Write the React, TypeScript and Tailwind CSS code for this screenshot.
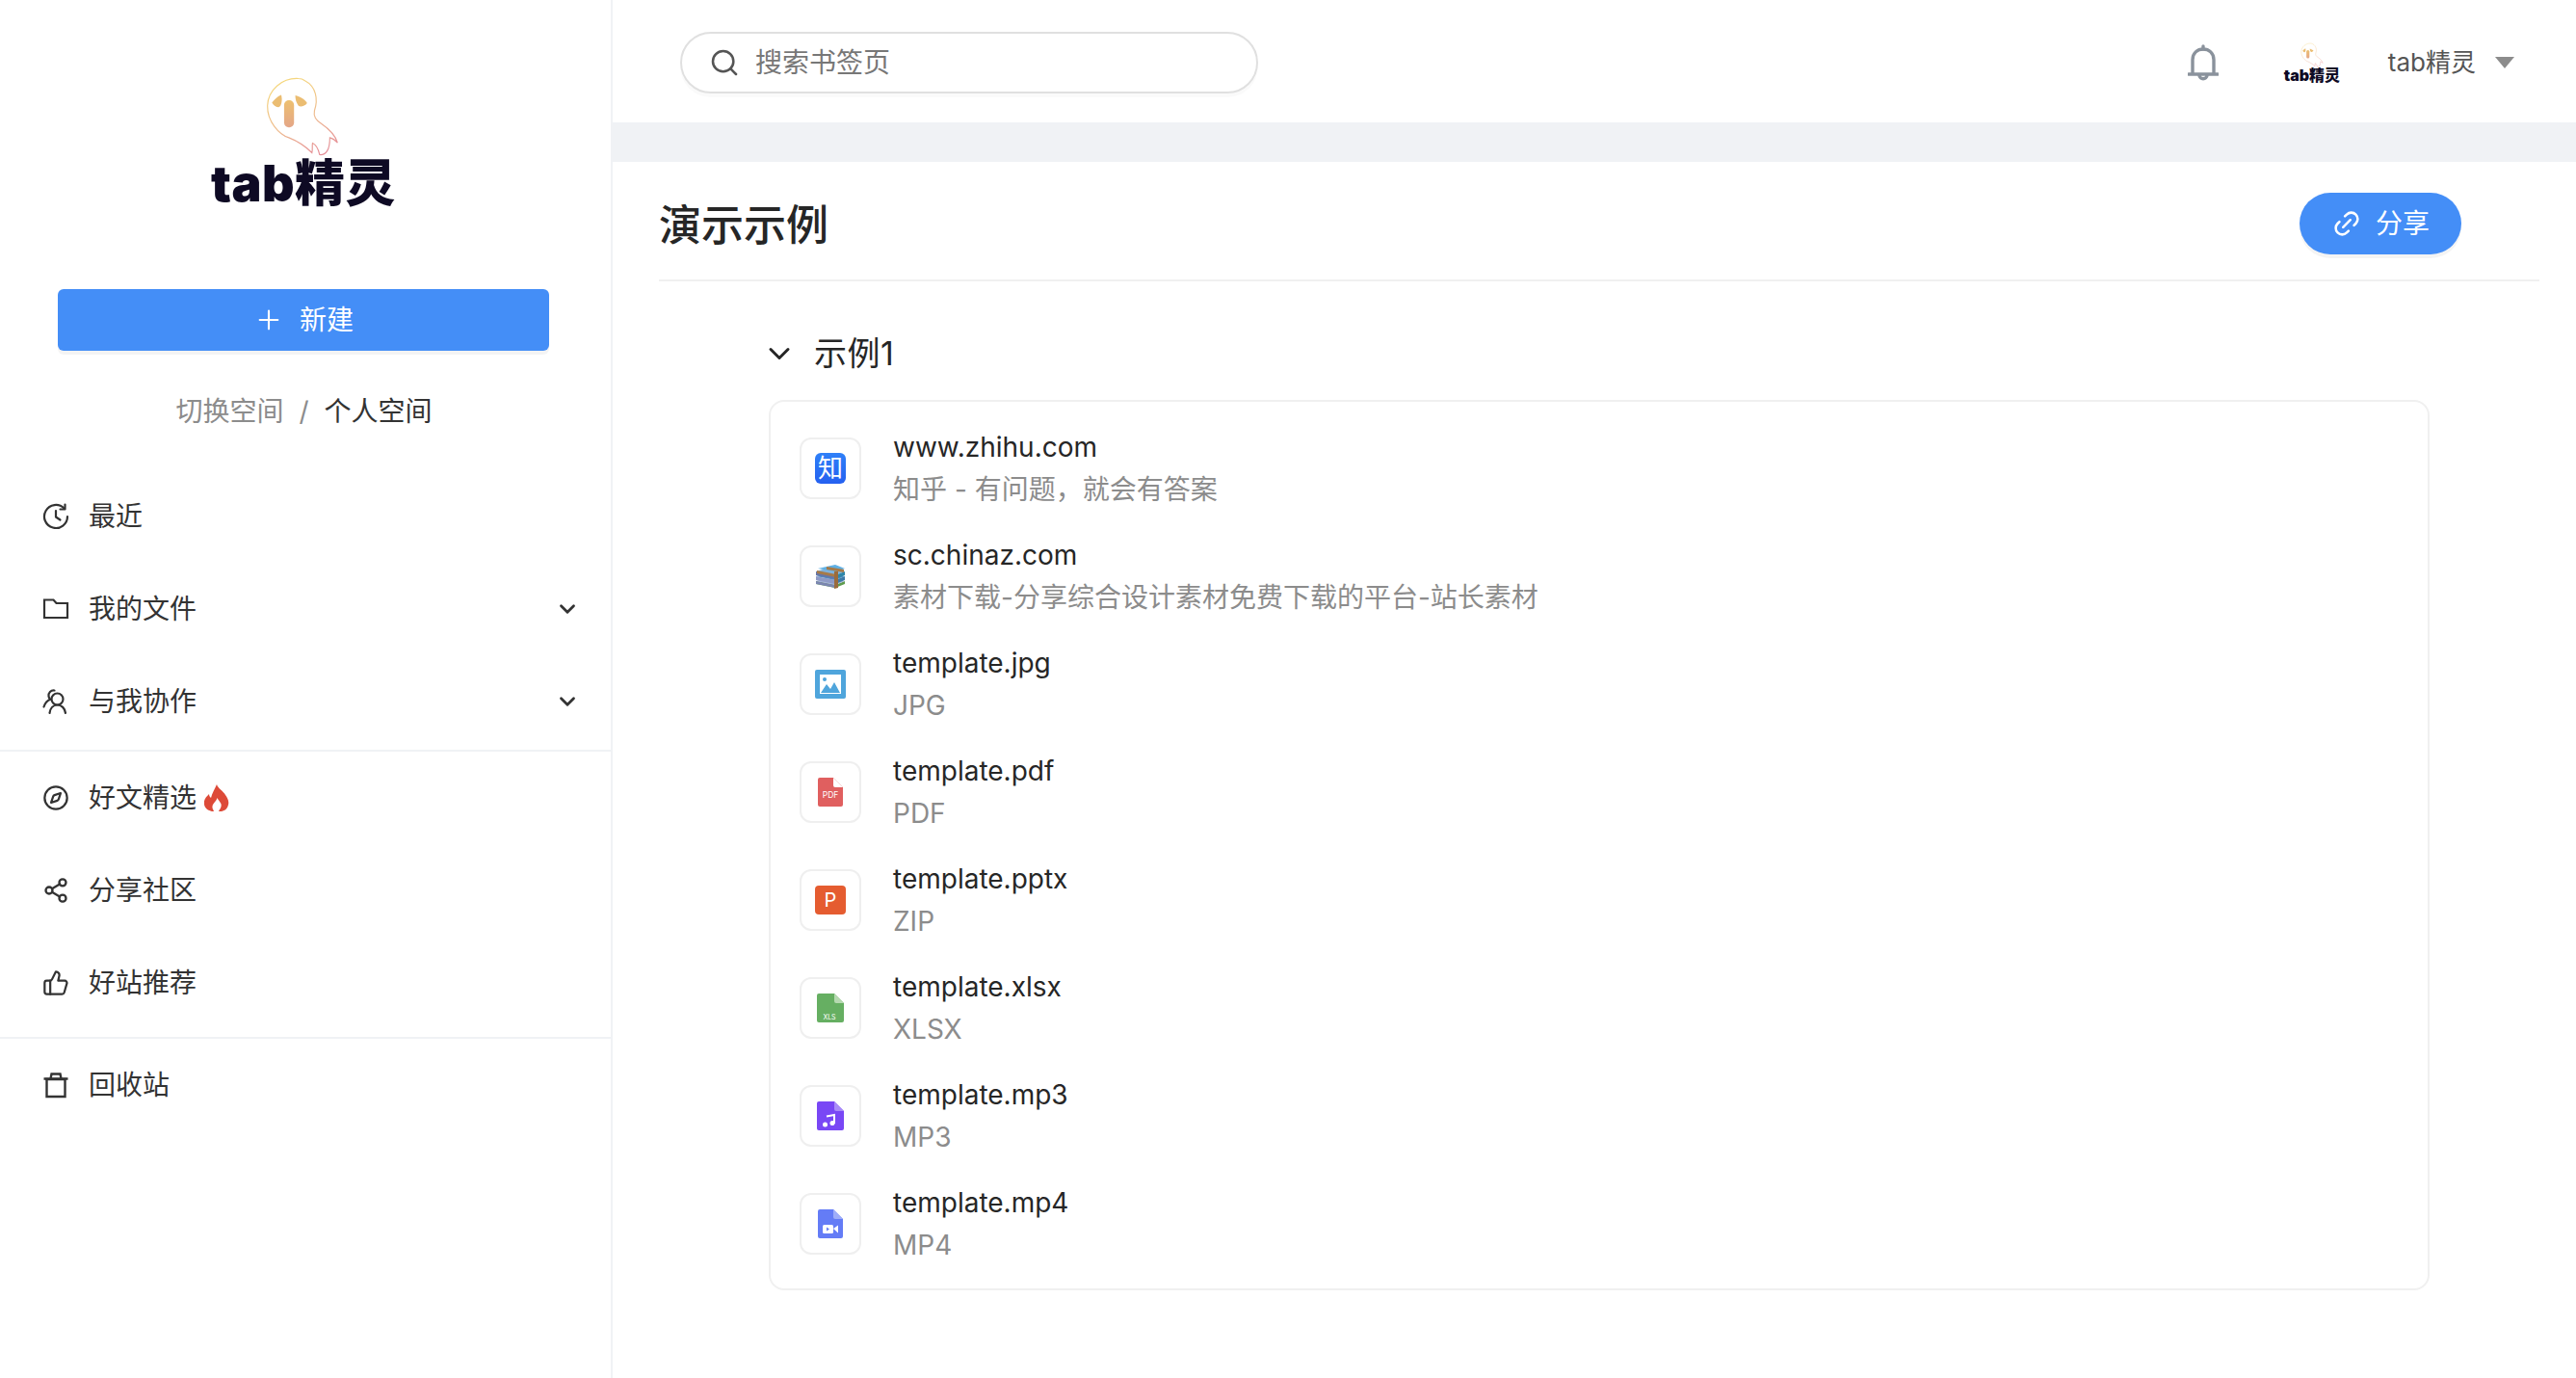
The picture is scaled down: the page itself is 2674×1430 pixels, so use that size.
import React from "react";
import { ChevronDown, Compass, Link2, Plus, Search, Share2, ThumbsUp } from "lucide-react";

const FONT = 'Inter, "Noto Sans CJK SC", sans-serif';

function Ghost({ id, className }: { id: string; className: string }) {
  return (
    <svg viewBox="225 55 235 255" className={className}>
      <defs>
        <linearGradient id={id} x1="0.3" y1="0" x2="0.7" y2="1">
          <stop offset="0" stopColor="#f5d77c" />
          <stop offset="0.55" stopColor="#edb98d" />
          <stop offset="1" stopColor="#e58f98" />
        </linearGradient>
        <linearGradient id={id + "n"} x1="0" y1="0" x2="0" y2="1">
          <stop offset="0" stopColor="#edc06f" />
          <stop offset="1" stopColor="#e4a688" />
        </linearGradient>
      </defs>
      <path
        d="M330 65C280 62 235 100 233 150C232 200 270 240 300 250C330 262 360 285 372 297C375 285 372 275 374 267C385 272 392 285 396 303C415 305 428 290 428 250C437 252 445 258 452 266C445 240 425 222 400 205C385 195 376 185 380 165C392 130 385 90 350 72C345 68 338 65 330 65Z"
        fill="none"
        stroke={`url(#${id})`}
        strokeWidth="3.5"
      />
      <path d="M247 140C255 130 265 120 276 116C280 130 278 150 268 155C260 155 252 148 247 140Z" fill="#ebbd72" />
      <path d="M320 118C335 122 350 130 357 142C350 152 335 155 330 150C322 140 320 130 320 118Z" fill="#ebbd72" />
      <rect x="285" y="133" width="31" height="85" rx="15" fill={`url(#${id}n)`} />
    </svg>
  );
}

function ClockIcon() {
  return (
    <svg viewBox="0 0 28 28" className="h-7 w-7" fill="none" stroke="#333" strokeWidth="2.2" strokeLinecap="round" strokeLinejoin="round">
      <path d="M22.500 5.500A12 12 0 1 0 26 14" />
      <path d="M23.500 1.500v5h-5" />
      <path d="M14 8v6.500l4.500 3" />
    </svg>
  );
}

function FolderIcon() {
  return (
    <svg viewBox="0 0 28 28" className="h-7 w-7" fill="none" stroke="#333" strokeWidth="2.2">
      <path d="M2 4.500h9.500l3 3.500H26v15H2z" />
    </svg>
  );
}

function PeopleIcon() {
  return (
    <svg viewBox="0 0 28 28" className="h-7 w-7" fill="none" stroke="#333" strokeWidth="2.2" strokeLinecap="round">
      <circle cx="15.500" cy="11.500" r="6" />
      <path d="M7.500 26c.6-5 3.600-8.500 8-8.500s7.900 3.500 8.500 8.500" />
      <path d="M12.500 2.500C8.800 2 6 5 6.500 8.500c.2 1.300.8 2.400 1.800 3.300C5 13 2.800 15.600 1.500 19.500" />
    </svg>
  );
}

function TrashIcon() {
  return (
    <svg viewBox="0 0 28 28" className="h-7 w-7" fill="none" stroke="#333" strokeWidth="2.4">
      <path d="M4.500 8h19v18h-19z" />
      <path d="M1.500 7.500h25M8.500 7.500l1-5h9l1 5" />
    </svg>
  );
}

function Flame() {
  return (
    <svg viewBox="0 0 26 28" className="h-7 w-[26px]">
      <path
        d="M13 0c1 4 7 7 9 11 2 3 4 6 3 10-1 4-3 6-7 7-4 1-7 1-10 0-4-1-7-3-8-7-1-5 2-8 5-11 0 2 1 3 2 4 1-5 4-9 6-14z"
        fill="#dd4a38"
      />
      <path d="M13.500 14c1 3 5 5 4 9-.5 2-2 3.500-2.500 5h-5c-.5-2-2-3-1.500-5.500.5-3 4-5 5-8.500z" fill="#fff" />
    </svg>
  );
}

function Item({ icon, label, arrow, extra }: { icon: React.ReactNode; label: string; arrow?: boolean; extra?: React.ReactNode }) {
  return (
    <div className="flex h-[96px] items-center pl-11 pr-[32px]">
      <span className="flex w-7 justify-center text-[#333]">{icon}</span>
      <span className="ml-5 text-[28px] leading-none text-[#333]">{label}</span>
      {extra && <span className="ml-2 flex">{extra}</span>}
      {arrow && <ChevronDown className="ml-auto h-[26px] w-[26px] text-[#333]" strokeWidth={2.6} />}
    </div>
  );
}

function Sidebar() {
  return (
    <aside className="flex h-full w-[636px] shrink-0 flex-col border-r-2 border-[#f0f2f5]">
      <div className="flex flex-col items-center pr-[4px] pt-[78px]">
        <Ghost id="g1" className="ml-[-2px] h-[85px] w-[78px]" />
        <span className="mt-[2px] text-[52px] font-black leading-[52px] tracking-[0.5px] text-[#0e0a24]">tab精灵</span>
      </div>
      <button className="ml-[60px] mr-[64px] mt-[83px] flex h-[64px] shrink-0 items-center justify-center gap-4 rounded-md bg-[#448ef7] text-[28px] text-white shadow-[0_4px_0_rgba(0,0,0,0.045)]">
        <Plus className="h-8 w-8" strokeWidth={1.6} />
        新建
      </button>
      <div className="mt-[43px] flex items-center justify-center pr-[3px] text-[28px] leading-[40px]">
        <span className="text-[#8c8c8c]">切换空间</span>
        <span className="mx-4 text-[#8c8c8c]">/</span>
        <span className="text-[#333]">个人空间</span>
      </div>
      <div className="mt-[41px]">
        <Item icon={<ClockIcon />} label="最近" />
        <Item icon={<FolderIcon />} label="我的文件" arrow />
        <Item icon={<PeopleIcon />} label="与我协作" arrow />
      </div>
      <div className="mt-[2px] border-t-2 border-[#f0f2f5]" />
      <Item icon={<Compass className="h-8 w-8" strokeWidth={1.9} />} label="好文精选" extra={<Flame />} />
      <Item icon={<Share2 className="h-[30px] w-[30px]" strokeWidth={2} />} label="分享社区" />
      <Item icon={<ThumbsUp className="h-8 w-8" strokeWidth={1.9} />} label="好站推荐" />
      <div className="mt-[8px] border-t-2 border-[#f0f2f5]" />
      <Item icon={<TrashIcon />} label="回收站" />
    </aside>
  );
}

function Header() {
  return (
    <header className="flex h-[127px] shrink-0 items-center pl-[70px] pr-[64px] pt-[2px]">
      <div className="flex h-[64px] w-[600px] items-center rounded-full border-2 border-[#e0e0e0] pl-[28px] shadow-[0_4px_0_rgba(0,0,0,0.02)]">
        <Search className="h-8 w-8 text-[#555]" strokeWidth={1.9} />
        <span className="ml-[16px] text-[28px] text-[#777]">搜索书签页</span>
      </div>
      <svg viewBox="0 0 32 36" className="ml-auto h-[38px] w-[32px]" fill="none" stroke="#8a929c" strokeWidth="3.400">
        <path d="M5 30V15C5 8 10 4 16 4s11 4 11 11v15" />
        <path d="M1 30h30" strokeLinecap="round" />
        <path d="M16 1v3" strokeLinecap="round" />
        <path d="M12 31c0 5 8 5 8 0" />
      </svg>
      <div className="ml-[64px] flex w-[66px] flex-col items-center">
        <Ghost id="g2" className="h-[26px] w-[26px]" />
        <span className="text-[16px] font-black leading-[16px] text-[#0e0a24]">tab精灵</span>
      </div>
      <span className="ml-[46px] text-[26px] text-[#555]">tab精灵</span>
      <span className="ml-[20px] h-0 w-0 border-x-[10px] border-t-[12px] border-x-transparent border-t-[#8c8c8c]" />
    </header>
  );
}

function Box({ children }: { children: React.ReactNode }) {
  return (
    <div className="flex h-16 w-16 shrink-0 items-center justify-center rounded-xl border-2 border-[#efefef]">{children}</div>
  );
}

function FileShape({ color, corner, w = 28, children }: { color: string; corner: string; w?: number; children: React.ReactNode }) {
  const x = (32 - w) / 2;
  return (
    <svg viewBox="0 0 32 32" className="h-8 w-8" style={{ fontFamily: FONT }}>
      <path d={`M${x + 2} 1h${w - 12}l10 10v18a2 2 0 0 1-2 2H${x + 2}a2 2 0 0 1-2-2V3a2 2 0 0 1 2-2z`} fill={color} />
      <path d={`M${x + w - 10} 1l10 10h-8a2 2 0 0 1-2-2z`} fill={corner} />
      {children}
    </svg>
  );
}

const icons: React.ReactNode[] = [
  <div key="z" className="flex h-8 w-8 items-center justify-center rounded-md bg-gradient-to-b from-[#2f80f8] to-[#2560f0] text-[26px] leading-none text-white">
    知
  </div>,
  <svg key="r" viewBox="0 0 32 26" className="h-[26px] w-8">
    <path d="M1 21l20 4 10-4v-3L21 22 1 18z" fill="#5f9c4e" />
    <path d="M1 18l20 4 10-4-20-3z" fill="#a5b4d8" />
    <path d="M1 18v3l20 4v-3z" fill="#7b86b0" />
    <path d="M1 13l20 4 10-4-20-3z" fill="#4d8fc4" />
    <path d="M1 13v4l20 4v-4z" fill="#8f9ac6" />
    <path d="M21 17l10-4v4l-10 4z" fill="#3d7aa8" />
    <path d="M1 8l20 4 10-4-20-3z" fill="#7fb2dc" />
    <path d="M1 8v4l20 4v-4z" fill="#6576a8" />
    <path d="M21 12l10-4v4l-10 4z" fill="#2f86a8" />
    <path d="M3 5l19 3 9-3-10-4z" fill="#5fb0e4" />
    <path d="M12 3l18 3v3l-18-3zM2 7l20 4v3L2 10z" fill="#a77a48" />
    <path d="M20 8h4v17l-4 1z" fill="#9a6b3c" />
  </svg>,
  <svg key="j" viewBox="0 0 32 30" className="h-[30px] w-8">
    <rect width="32" height="30" rx="2" fill="#4fa5dc" />
    <path d="M5 5h22v20H5z" fill="#fff" />
    <path d="M6 24l6-9 4 5 4-7 6 11z" fill="#4fa5dc" />
    <circle cx="10" cy="10" r="2" fill="#4fa5dc" />
  </svg>,
  <FileShape key="p" color="#e05f5f" corner="#fff" w={26}>
    <text x="16" y="22" textAnchor="middle" fontSize="8.500" fill="#fff">PDF</text>
  </FileShape>,
  <div key="ppt" className="flex h-[30px] w-8 items-center justify-center rounded bg-[#e55c30] text-[20px] leading-none text-white">
    P
  </div>,
  <FileShape key="x" color="#66af62" corner="#b6d9b0">
    <text x="15" y="28" textAnchor="middle" fontSize="7" fill="#fff">XLS</text>
  </FileShape>,
  <FileShape key="m" color="#7947f5" corner="#a98bf8">
    <path d="M12 16.500l8-1.500v9" fill="none" stroke="#fff" strokeWidth="2" />
    <circle cx="10.500" cy="25" r="2.500" fill="#fff" />
    <circle cx="18" cy="23.500" r="2.500" fill="#fff" />
  </FileShape>,
  <FileShape key="v" color="#647cf6" corner="#9eadf9" w={26}>
    <rect x="8" y="17" width="11" height="9" rx="1.500" fill="#fff" />
    <path d="M19 21l5-3.500v8z" fill="#fff" />
    <path d="M12 19.500v4l3-2z" fill="#647cf6" />
  </FileShape>,
];

const rows = [
  ["www.zhihu.com", "知乎 - 有问题，就会有答案"],
  ["sc.chinaz.com", "素材下载-分享综合设计素材免费下载的平台-站长素材"],
  ["template.jpg", "JPG"],
  ["template.pdf", "PDF"],
  ["template.pptx", "ZIP"],
  ["template.xlsx", "XLSX"],
  ["template.mp3", "MP3"],
  ["template.mp4", "MP4"],
];

function Main() {
  return (
    <main className="flex h-full min-w-0 flex-1 flex-col">
      <Header />
      <div className="h-[41px] shrink-0 bg-[#f0f2f5]" />
      <div className="ml-[48px] mr-[38px] flex h-[124px] shrink-0 items-center justify-between border-b-2 border-[#f0f0f0]">
        <h1 className="mt-[10px] text-[44px] font-medium leading-none text-[#262626]">演示示例</h1>
        <button className="mr-[81px] mt-[6px] flex h-[64px] w-[168px] items-center justify-center gap-[14px] rounded-full bg-[#448ef7] text-[28px] text-white shadow-[0_4px_0_rgba(0,0,0,0.045)]">
          <Link2 className="h-8 w-8 -rotate-45" strokeWidth={1.9} />
          分享
        </button>
      </div>
      <div className="ml-[48px] mr-[38px] px-[114px]">
        <div className="mt-[48px] flex h-[54px] items-center">
          <ChevronDown className="ml-[-7px] h-[36px] w-[36px] text-[#262626]" strokeWidth={2} />
          <span className="ml-[18px] text-[34px] leading-none tracking-[0.5px] text-[#262626]">示例1</span>
        </div>
        <div className="mt-[21px] rounded-2xl border-2 border-[#f0f0f0] pb-[23px] pl-[30px] pt-[25px]">
          {rows.map(([title, sub], i) => (
            <div key={title} className="mb-[24px] flex items-center last:mb-0">
              <Box>{icons[i]}</Box>
              <div className="ml-[33px]">
                <div className="text-[28px] leading-[44px] text-[#262626]">{title}</div>
                <div className="text-[28px] leading-[44px] text-[#8c8c8c]">{sub}</div>
              </div>
            </div>
          ))}
        </div>
      </div>
    </main>
  );
}

export default function App() {
  return (
    <div className="flex h-[1430px] w-full overflow-hidden bg-white" style={{ fontFamily: FONT }}>
      <Sidebar />
      <Main />
    </div>
  );
}
